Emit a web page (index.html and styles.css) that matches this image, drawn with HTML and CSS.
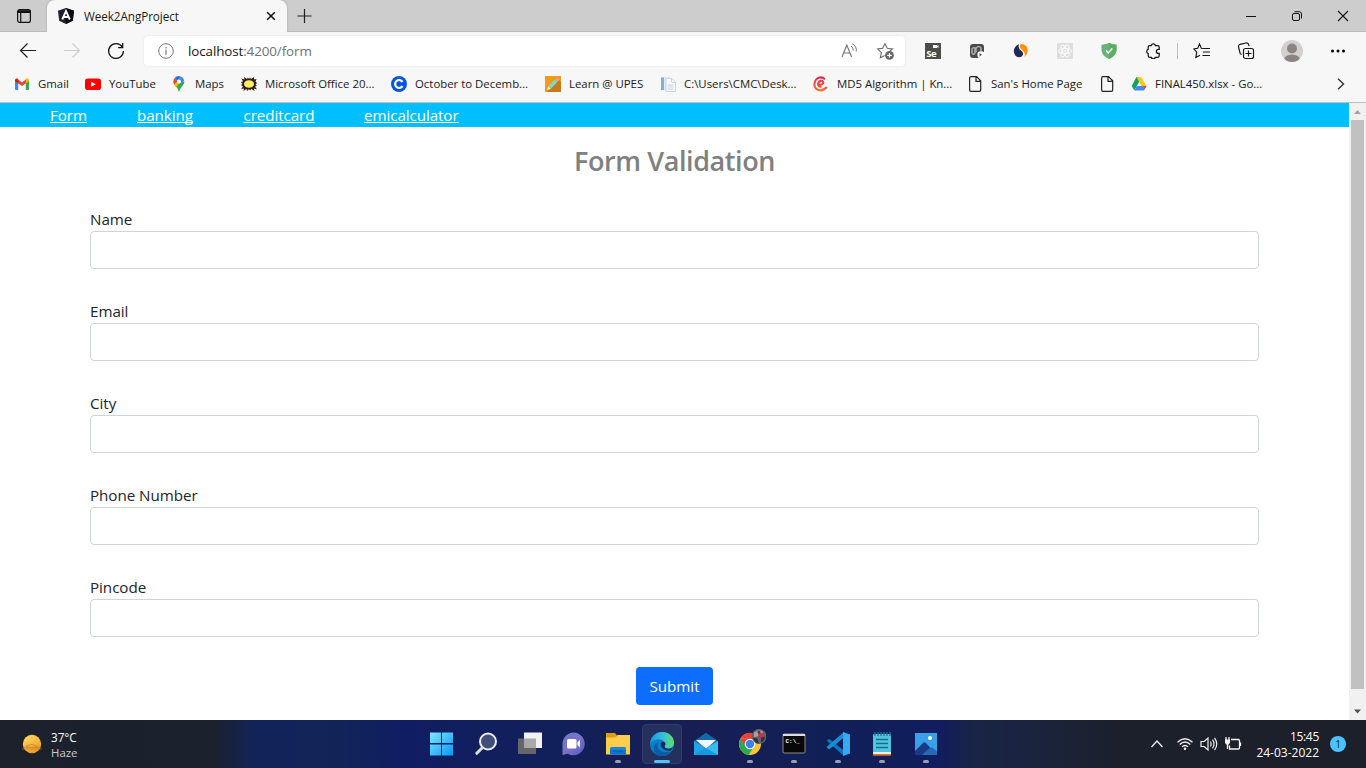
FILE: index.html
```html
<!DOCTYPE html>
<html lang="en">
<head>
<meta charset="utf-8">
<title>Week2AngProject</title>
<link rel="stylesheet" href="styles.css">
</head>
<body>
<div class="screen">
  <header class="tabstrip">
    <div class="tab-actions"><svg width="16" height="16" viewBox="0 0 16 16" fill="none" stroke="#111" stroke-width="1.2"><rect x="1.6" y="1.6" width="12.8" height="12.8" rx="2.2"/><path d="M1.6 4.2h12.8M2 3h12" stroke-width="1.6"/><path d="M4.7 4.5v9.7"/></svg></div>
    <div class="tab">
      <svg width="16" height="16" viewBox="0 0 16 16"><path d="M8 0l8 2.8-1.2 10L8 16l-6.8-3.200L0 2.800z" fill="#1d222b"/><path d="M8 0l8 2.800-1.200 10L8 16z" fill="#0b0f15"/><path d="M4.200 11.500L8 3l3.800 8.500M5.800 9h4.400" fill="none" stroke="#fff" stroke-width="1.900"/></svg>
      <span class="tab-title">Week2AngProject</span>
      <svg class="tab-close" width="10" height="10" viewBox="0 0 10 10"><path d="M1.200 1.200l7.600 7.600M8.800 1.200L1.200 8.800" stroke="#111" stroke-width="1.500"/></svg>
    </div>
    <svg class="new-tab" width="16" height="16" viewBox="0 0 16 16"><path d="M8.500 1v14M1.500 8h14" stroke="#222" stroke-width="1.200"/></svg>
    <div class="window-controls">
      <span><svg width="12" height="12" viewBox="0 0 12 12"><path d="M1 6.500h10" stroke="#111"/></svg></span>
      <span><svg width="12" height="12" viewBox="0 0 12 12" fill="none" stroke="#111"><rect x="1.500" y="3.500" width="7" height="7" rx="1.500"/><path d="M3.500 1.700h4.800q2.200 0 2.200 2.200v4.600"/></svg></span>
      <span><svg width="12" height="12" viewBox="0 0 12 12"><path d="M1 1l10 10M11 1L1 11" stroke="#111" stroke-width="1.100"/></svg></span>
    </div>
  </header>

  <div class="toolbar">
    <span class="tool"><svg width="18" height="16" viewBox="0 0 18 16" fill="none" stroke="#222" stroke-width="1.200"><path d="M17 7.500H1.500M8.500.5L1.500 7.500l7 7"/></svg></span>
    <span class="tool"><svg width="18" height="16" viewBox="0 0 18 16" fill="none" stroke="#cdcdcd" stroke-width="1.200"><path d="M1 7.500h15.500M9.500.5l7 7-7 7"/></svg></span>
    <span class="tool"><svg width="18" height="18" viewBox="0 0 18 18" fill="none" stroke="#111" stroke-width="1.250"><path d="M15.200 5A7.400 7.400 0 1 0 16.400 9"/><path d="M15.700 1v4.500h-4.500"/></svg></span>
    <div class="address">
      <svg width="16" height="16" viewBox="0 0 16 16" fill="none" stroke="#777"><circle cx="8" cy="8" r="7.300"/><path d="M8 6.800v5M8 4v1.500" stroke-width="1.200"/></svg>
      <span class="url"><b>localhost</b>:4200/form</span>
      <svg class="read" width="16" height="16" viewBox="0 0 16 16" fill="none" stroke="#747474"><path d="M1 14L5.800 2l4.800 12M2.700 10h6.200" stroke-width="1.100"/><path d="M10 3q2.500 1.500 2.300 4.500M11.300.7q4.500 2.500 4 7.800"/></svg>
      <svg width="18" height="18" viewBox="0 0 18 18"><path d="M9 1.500l2.200 4.700 5.200.7-3.300 3.100M9 1.500L6.700 6.200l-5 .7 3.700 3.700-1 5.100 4.300-2.300" fill="none" stroke="#6b6b6b" stroke-width="1.100"/><circle cx="13.500" cy="13.300" r="4.400" fill="#666"/><path d="M13.500 11v4.600M11.200 13.300h4.600" stroke="#fff" stroke-width="1.200"/></svg>
    </div>
    <span class="tool first"><svg width="16" height="16" viewBox="0 0 16 16"><path fill="#4a4d4a" d="M0 0h16v16H0z"/><path fill="#fff" d="M8 2h4v1l1.500-1v3L12 4v1H8z"/><text x="1.200" y="14" class="se">Se</text></svg></span>
    <span class="tool"><svg width="16" height="16" viewBox="0 0 16 16"><rect x="1" y="1" width="14" height="14" rx="3" fill="#4b4b4b"/><path d="M3 10V6q2.500-3 3 0v4q-2 2.500-3 0M7 9V5q3-3 5 0v4" fill="none" stroke="#aaa" stroke-width="1.600"/><rect x="8.500" y="8.500" width="7" height="6.500" rx="2" fill="#fff"/><path d="M10.500 10v3.500l2.500-1.700z" fill="#555"/></svg></span>
    <span class="tool"><svg width="16" height="16" viewBox="0 0 16 16"><path d="M6 1.200A7.200 7.200 0 0 0 3 13.200q3.500 2.300 6 0 2.500-3.200-.8-5.400Q4.500 5 6 1.200z" fill="#1f2a5a"/><path d="M7.200 1.200q4-1 6.600 2.500 2.800 6-2.600 10.300 2-4-1.700-6.500Q5.600 4.700 7.200 1.200z" fill="#fb9208"/></svg></span>
    <span class="tool"><svg width="16" height="16" viewBox="0 0 16 16" fill="none" stroke="#fafafa"><path d="M0 0h16v16H0z" fill="#dedede" stroke="none"/><ellipse cx="8" cy="8" rx="6.500" ry="2.600"/><ellipse cx="8" cy="8" rx="6.500" ry="2.600" transform="rotate(60 8 8)"/><ellipse cx="8" cy="8" rx="6.500" ry="2.600" transform="rotate(120 8 8)"/><circle cx="8" cy="8" r="1"/></svg></span>
    <span class="tool"><svg width="16" height="16" viewBox="0 0 16 16"><path d="M8 0q4 1.500 7.500 1.700v5.500Q15 13 8 16 1 13 .5 7.200V1.700Q4 1.500 8 0z" fill="#67b279"/><path d="M8 0q4 1.500 7.500 1.700v5.500Q15 13 8 16z" fill="#5cae63"/><path d="M5 7.500L7.300 10l4-4.500" fill="none" stroke="#fff" stroke-width="1.500"/></svg></span>
    <span class="tool"><svg width="16" height="16" viewBox="0 0 16 16" fill="none" stroke="#161616" stroke-width="1.250"><path d="M4.500 2.500H6.200a2.200 2.200 0 0 1 4.200 0h2.100q1.700 0 1.700 1.600v2.300h-.8a2 2 0 0 0 0 4h.8v2.300q0 1.600-1.700 1.600h-2.100a2.200 2.200 0 0 1-4.200 0H4.900q-1.700 0-1.700-1.600v-2.200a2.200 2.200 0 0 1 0-4.200V4.100q0-1.600 1.300-1.600z"/></svg></span>
    <i class="divider"></i>
    <span class="tool"><svg width="18" height="16" viewBox="0 0 18 16" fill="none" stroke="#161616" stroke-width="1.150"><path d="M10.700 5.500L8.300 5.200 6.500 1 4.700 5.200.8 5.900l2.900 3.300-.8 5.200 4-2.200M10.500 5.500H17M10 9h7M9.500 12.500H17"/></svg></span>
    <span class="tool"><svg width="18" height="18" viewBox="0 0 18 18" fill="none" stroke="#161616" stroke-width="1.200"><rect x="6.500" y="6.500" width="10" height="10" rx="2"/><path d="M11.500 8.500v6M8.500 11.500h6M4.700 12.500l-1.500-.8L1.500 5q-.3-2 1.500-2.700L9 1q2-.3 2.700 1.700l.4 1.500"/></svg></span>
    <span class="tool profile"><svg width="22" height="22" viewBox="0 0 22 22"><defs><clipPath id="face"><circle cx="11" cy="11" r="11"/></clipPath></defs><g clip-path="url(#face)"><path fill="#d2d0ce" d="M0 0h22v22H0z"/><g fill="#8a8583"><circle cx="11" cy="8.500" r="5"/><ellipse cx="11" cy="20" rx="8" ry="5.500"/></g></g></svg></span>
    <span class="tool profile"><svg width="16" height="4" viewBox="0 0 16 4"><circle cx="2.500" cy="2" r="1.500"/><circle cx="8" cy="2" r="1.500"/><circle cx="13.500" cy="2" r="1.500"/></svg></span>
  </div>

  <nav class="bookmarks">
    <a class="bm w55"><svg width="16" height="16" viewBox="0 0 16 16"><path fill="#4285f4" d="M1 4l3.200 2v8H2q-1 0-1-1z"/><path fill="#34a853" d="M15 4l-3.200 2v8H14q1 0 1-1z"/><path fill="#ea4335" d="M3 2.500l5 4 5-4v4L8 10 3 6.500z"/><path fill="#c5221f" d="M1 4q.3-2 2-1.500L4.200 3.500v4L1 5z"/><path fill="#fbbc04" d="M15 4q-.3-2-2-1.500l-1.200 1v4L15 5z"/></svg><span>Gmail</span></a>
    <a class="bm w70"><svg width="16" height="16" viewBox="0 0 16 16"><rect y="2.500" width="16" height="11.500" rx="2.800" fill="#f00"/><path fill="#fff" d="M6.200 5.700v5l4.600-2.500z"/></svg><span>YouTube</span></a>
    <a class="bm w54"><svg width="16" height="16" viewBox="0 0 16 16"><path fill="#34a853" d="M8 16q-.5-3-3-5.500T2.500 5.500h11Q13.300 8 11 10.500T8 16z"/><path fill="#fbbc04" d="M3 8.500L9.700.5 12 3 5 11z"/><path fill="#ea4335" d="M3.700 2L6.500 5 3 8.500Q1.500 4.500 3.700 2z"/><path fill="#1a73e8" d="M3.700 2Q6-.7 9.700.4L6.500 5z"/><path fill="#4285f4" d="M9.700.4q3 1 3.500 4L10 7.500 7.500 4z"/><circle cx="8" cy="5.500" r="2" fill="#fff"/></svg><span>Maps</span></a>
    <a class="bm w134"><svg width="16" height="16" viewBox="0 0 16 16"><path fill="#352010" d="M8 3l1-1.500 1 1.500L13 1v2.500l2.500-.5-1 2.500L16 7l-1.500 1.500L16 10l-2 .5 2 3-3-1 .5 2.500-3-2-1.500 1.500L8 13l-1.500 2L5.500 13 2.500 15l.5-2.500-3 .5 2-2.500L0 9l1.500-1L0 6l2-.5L.5 2.500l3 1L3 1l3 2 1-1.500z"/><ellipse cx="8" cy="8" rx="5" ry="3.800" fill="#ffeb66"/></svg><span>Microsoft Office 20...</span></a>
    <a class="bm w138"><svg width="16" height="16" viewBox="0 0 16 16"><circle cx="8" cy="8" r="8" fill="#0b57d7"/><path d="M11.500 5.800a4 4 0 1 0 0 4.400" fill="none" stroke="#fff" stroke-width="2.200"/></svg><span>October to Decemb...</span></a>
    <a class="bm w99"><svg width="16" height="16" viewBox="0 0 16 16"><path fill="#f49a1a" d="M0 0h16v16H0z"/><path fill="#c77818" d="M3 14L14 4l2 2v10H2z"/><path d="M4.500 11.500l7-7" stroke="#74dbc4" stroke-width="3.500"/><path d="M11 3l2-1 1.500 1.500-1 2z" fill="#ef96ae"/><path fill="#fff0cc" d="M2 14l1-3.800L6 13z"/></svg><span>Learn @ UPES</span></a>
    <a class="bm w137"><svg width="16" height="16" viewBox="0 0 16 16"><path fill="#e4e9ef" d="M1 1h9v13H1z"/><path fill="#79b4d6" d="M1 1.500h3V14H1z"/><path fill="#f8f9fb" stroke="#bdc7d3" stroke-width=".7" d="M6 2.500h6l3.500 3.500v9.500H6z"/><path d="M7.500 9h6M7.500 11h6M7.500 13h6M11.500 3v3.500H15" fill="none" stroke="#cbd3dc"/></svg><span>C:\Users\CMC\Desk...</span></a>
    <a class="bm w138"><svg width="16" height="16" viewBox="0 0 16 16" fill="none" stroke-width="2"><defs><linearGradient id="ember" y2="1" x2="0"><stop stop-color="#dc2854"/><stop offset="1" stop-color="#ff6a2f"/></linearGradient></defs><path d="M5 8.600Q9 9.300 10.300 7 10.300 4.600 8 4.800 5.200 5.500 5 8.600q.4 2.700 3.500 1.900M12 3.200Q8-.3 3.500 3-.5 8 3 12.600q5.500 4.200 10.800-1.600" stroke="url(#ember)"/></svg><span>MD5 Algorithm | Kn...</span></a>
    <a class="bm w116"><svg width="16" height="16" viewBox="0 0 16 16" fill="none" stroke="#222" stroke-width="1.200"><path d="M4 .6h5.500l4.200 4.200V14q0 1.400-1.500 1.400H4q-1.400 0-1.400-1.400V2Q2.600.6 4 .6zM9 .6V5.300h4.700"/></svg><span>San's Home Page</span></a>
    <a class="bm w16"><svg width="16" height="16" viewBox="0 0 16 16" fill="none" stroke="#222" stroke-width="1.200"><path d="M4 .6h5.500l4.200 4.200V14q0 1.400-1.500 1.400H4q-1.400 0-1.400-1.400V2Q2.600.6 4 .6zM9 .6V5.300h4.700"/></svg></a>
    <a class="bm w132"><svg width="16" height="16" viewBox="0 0 16 16"><path fill="#11a35c" d="M5.300 1.200H8l.8 3.500L3.300 14.300.7 10z"/><path fill="#fdc716" d="M6 1.200h4.300L15.400 10h-4.900L6 2z"/><path fill="#4688f4" d="M3.300 14.500L5.700 10h9.700l-2.300 4.500z"/><path fill="#ea4335" d="M12.200 10h3.200l-1.600 3z"/></svg><span>FINAL450.xlsx - Go...</span></a>
    <svg class="more" width="8" height="12" viewBox="0 0 8 12" fill="none" stroke="#333" stroke-width="1.400"><path d="M1 .7L6.500 6 1 11.300"/></svg>
  </nav>

  <div class="viewport">
    <main class="page">
      <nav class="site-nav"><a class="n1">Form</a><a class="n2">banking</a><a class="n3">creditcard</a><a class="n4">emicalculator</a></nav>
      <h3>Form Validation</h3>
      <form>
        <label>Name<input type="text"></label>
        <label>Email<input type="text"></label>
        <label>City<input type="text"></label>
        <label>Phone Number<input type="text"></label>
        <label>Pincode<input type="text"></label>
        <button type="button">Submit</button>
      </form>
    </main>
    <div class="scrollbar">
      <svg width="17" height="17" viewBox="0 0 17 17"><path d="M5 11h7L8.500 7z" fill="#a3a3a3"/></svg>
      <div class="thumb"></div>
      <svg width="17" height="17" viewBox="0 0 17 17"><path d="M5 6.500h7l-3.500 4z" fill="#505050"/></svg>
    </div>
  </div>

  <footer class="taskbar">
    <div class="weather">
      <svg width="22" height="20" viewBox="0 0 22 20"><defs><linearGradient id="sun" x2=".6" y2="1"><stop stop-color="#ffe071"/><stop offset="1" stop-color="#f39a16"/></linearGradient></defs><circle cx="11" cy="10" r="9.200" fill="url(#sun)"/><path d="M5 12.500q6-4 11 0M1 15h20M3 13.300h16" stroke="#a9803f" stroke-width="1.200" fill="none" opacity=".6"/></svg>
      <div class="reading"><p class="temp">37°C</p><p class="sky">Haze</p></div>
    </div>
    <div class="apps">
      <span class="app"><svg width="24" height="24" viewBox="0 0 24 24"><defs><linearGradient id="win" x2="1" y2="1"><stop stop-color="#7be8ff"/><stop offset="1" stop-color="#0b96f5"/></linearGradient></defs><path fill="url(#win)" d="M0 .500H11V11H0zM12 .500H23V11H12zM0 12.500H11v11H0zM12 12.500h11v11H12z"/></svg></span>
      <span class="app"><svg width="24" height="24" viewBox="0 0 24 24"><circle cx="14" cy="9.500" r="8" fill="#424d7c" stroke="#eee" stroke-width="2"/><path d="M8.300 15.700l-5.500 5.600" stroke="#ddd" stroke-width="3" stroke-linecap="round"/></svg></span>
      <span class="app"><svg width="24" height="24" viewBox="0 0 24 24"><path fill="#666" d="M0 6.500h18V22H0z"/><path fill="#f2f2f2" d="M6 .500h18v15.500H6z"/><path fill="#a9a9a9" d="M6 6.500h12V16H6z"/></svg></span>
      <span class="app"><svg width="24" height="24" viewBox="0 0 24 24"><defs><linearGradient id="chat" y2="1"><stop stop-color="#6679cf"/><stop offset=".5" stop-color="#7c72c8"/><stop offset="1" stop-color="#5059c9"/></linearGradient></defs><path d="M11.500.500a11.400 11.400 0 1 1-6 21.200L.5 23V12A11.300 11.300 0 0 1 11.500.500z" fill="url(#chat)"/><rect x="5" y="7" width="9.500" height="9.500" rx="1.500" fill="#fff"/><path d="M15.500 10.500l2.500-2.800v8l-2.500-2.800z" fill="#fff"/></svg></span>
      <span class="app open"><svg width="24" height="24" viewBox="0 0 24 24"><path fill="#e29c12" d="M0 1h9l2 2.500-2 3H0z"/><path fill="#fdcc4a" d="M0 5.500h9L11.500 3H24v19.500H0z"/><path fill="#0874cc" d="M4 22.500V17q0-2 2-2h12q2 0 2 2v5.500z"/><path fill="#1688dc" d="M4 16.500q1-1.500 3-1.500h11q2 0 2 2v1H4z"/><path stroke="#0456a3" d="M7 19h10"/></svg></span>
      <span class="app active"><svg width="24" height="24" viewBox="0 0 24 24"><defs><linearGradient id="sea"><stop stop-color="#1596df"/><stop offset=".55" stop-color="#35c1da"/><stop offset="1" stop-color="#65dc60"/></linearGradient></defs><circle cx="12" cy="12" r="12" fill="#0b7fc9"/><path d="M0 11.500C1 4.500 6 0 12 0c7 0 12 5 12 10.500 0 4-3 6-6.500 6s-4-1.800-3-3C17 8 7 3.500 0 11.500z" fill="url(#sea)"/><path d="M8 10.500C5 17 12 22 20.500 19.500 17 24 11 25.500 6 22 2 18.500 3.500 12 8 10.500z" fill="#0a5ca6"/><path d="M10.500 12q.8-2.700 3.500-2.200 2.500 1.500.8 4-1 2 2.700 3 3 0 5.300-1.300-.5 2-2.300 3.200Q12 19.500 10.500 12z" fill="#1b2757"/></svg></span>
      <span class="app"><svg width="24" height="24" viewBox="0 0 24 24"><path fill="#1268ac" d="M0 9L12 .7 24 9v5H0z"/><path fill="#f2f7fb" d="M2 8h20l-10 9z"/><path fill="#21a5e8" d="M0 9l12 7-12 7z"/><path fill="#38bbf2" d="M24 9L0 23h24z"/><path fill="#159ae1" d="M0 23l12-7 12 7z"/></svg></span>
      <span class="app open"><svg width="32" height="30" viewBox="0 0 32 30"><g transform="translate(2 -3)"><circle cx="14" cy="18" r="11" fill="#fbc633"/><path d="M4.500 12.500A11 11 0 0 1 24 13H14z" fill="#e84335"/><path d="M4.500 12.500a11 11 0 0 0 8.300 16.400l5.200-8.900-4 1.500-4-1.500z" fill="#2da951"/><path d="M4.500 12.500L9.800 21l2-8z" fill="#e84335"/><circle cx="14" cy="18" r="5.300" fill="#fff"/><circle cx="14" cy="18" r="4.200" fill="#3b80ed"/><circle cx="23" cy="10.500" r="7.400" fill="#6b6263"/><path d="M18 6.500l5-2.500 4 1.500-1 3-8 3z" fill="#a8a09e"/><path d="M22 7h5v5l-4 1z" fill="#bd3458"/><path d="M17 11.500l4 1 2 5q-4 0-6-6zM25 11.500l4-1q0 4-4 6z" fill="#273044"/><circle cx="23" cy="6" r="1.500" fill="#50372f"/></g></svg></span>
      <span class="app open"><svg width="24" height="24" viewBox="0 0 24 24"><rect x="1" y="2" width="22" height="19" rx="1" fill="#080808" stroke="#8c8c8c"/><path fill="#ddd" d="M1 2h22v2H1z"/><text x="3.500" y="10.500" class="prompt">C:\_</text></svg></span>
      <span class="app open"><svg width="24" height="24" viewBox="0 0 24 24"><path d="M1 8.500l2-1.700L18 18.500V24L1.500 9.500z" fill="#0877bd"/><path d="M1 15.800l2 1.600L18 5.500V0L1 14.500z" fill="#168fd3"/><path d="M17 0l7 2.500v19L17 24z" fill="#36a9f0"/></svg></span>
      <span class="app open"><svg width="24" height="24" viewBox="0 0 24 24"><rect x="3" y="2" width="18" height="20" rx="1" fill="#58c2dd"/><path d="M5 0v4M8 0v4M11 0v4M14 0v4M17 0v4M20 0v4" stroke="#167997" stroke-width="1.300"/><path d="M6 7.500h12M6 11.500h12M6 15.500h12" stroke="#087590" stroke-width="1.500"/><path d="M3 20h18v3H3z" fill="#eee"/><path d="M3 22.200h18v1.800H3z" fill="#b85b12"/></svg></span>
      <span class="app open"><svg width="24" height="24" viewBox="0 0 24 24"><path fill="#38a1e8" d="M1 1h22v22H1z"/><path fill="#183b83" d="M1 19l8-8q1.500-1.300 3 0L23 23H1z"/><path fill="#2869b7" d="M11 20l5-4q1.500-1 3 0l4 3.500V23H8z"/><circle cx="16" cy="6" r="2" fill="#fff"/></svg></span>
    </div>
    <div class="tray">
      <svg class="chev" width="14" height="10" viewBox="0 0 14 10"><path d="M1.500 8L7 2l5.500 6" fill="none" stroke="#eee" stroke-width="1.300"/></svg>
      <svg class="wifi" width="18" height="16" viewBox="0 0 18 16" fill="none" stroke="#f2f2f2" stroke-width="1.400"><path d="M1.500 6.200q7.500-7 15 0M3.700 8.500q5.300-5 10.600 0M6 10.800q3-2.800 6 0"/><circle cx="9" cy="12.800" r="1.300" fill="#fff" stroke="none"/></svg>
      <svg class="sound" width="18" height="16" viewBox="0 0 18 16" fill="none" stroke="#eee" stroke-width="1.200"><path d="M1 5.500h3.200L8 2v12l-3.800-3.500H1zM10.300 5.500q1.700 2.500 0 5M12.500 3.700q3 4.300 0 8.600M14.500 1.800q4.500 6.200 0 12.400"/></svg>
      <svg class="battery" width="18" height="16" viewBox="0 0 18 16" fill="none" stroke="#f4f4f4" stroke-width="1.300"><path d="M7 3.500h7.300q1.200 0 1.200 1.200v7q0 1.300-1.200 1.300H5.500V9.500M16.500 6.500v3.500"/><path d="M2 1v3M5 1v3M3.500 8v5" /><path d="M1 3.500h5v3L4.800 8.500H2.200L1 6.500z" fill="#f4f4f4" stroke="none"/></svg>
      <div class="clock"><p class="time">15:45</p><p class="date">24-03-2022</p></div>
      <span class="badge">1</span>
    </div>
  </footer>
</div>
</body>
</html>
```
FILE: styles.css
```css
* { box-sizing: border-box; }
body { margin: 0; font-family: "Open Sans", "Noto Sans", sans-serif; overflow: hidden; }
p { margin: 0; }
svg { display: block; flex: none; }
.screen { width: 1366px; height: 768px; display: flex; flex-direction: column; background: #fff; }

/* Browser chrome */
.tabstrip { height: 32px; display: flex; background: #cdcdcd; box-shadow: inset 0 -1px #bdbdbd; flex: none; }
.tab-actions { width: 47px; display: flex; align-items: center; padding-left: 16px; border-radius: 0 0 6px 0; }
.tab { width: 240px; height: 32px; background: #f7f7f7; border-radius: 8px 8px 0 0; display: flex; align-items: center; padding: 0 11px 0 11px; box-shadow: 0 0 2px #999; clip-path: inset(-2px -3px 0 -3px); }
.tab-title { margin: -1px 0 0 10px; font-size: 11.7px; color: #191919; letter-spacing: -.06px; flex: 1; white-space: nowrap; }
.new-tab { margin: 8px 0 0 9px; }
.window-controls { margin-left: auto; display: flex; }
.window-controls span { width: 46px; display: flex; align-items: center; justify-content: center; }
.toolbar { height: 38px; padding-left: 6px; background: #f7f7f7; display: flex; align-items: center; flex: none; }
.tool { width: 44px; height: 30px; display: flex; align-items: center; justify-content: center; flex: none; }
.tool.first { margin-left: 6px; }
.tool.profile { margin-left: 2px; }
.tool.profile + .profile { margin-left: 2px; }
.address { margin-left: 6px; width: 761px; height: 30px; border-radius: 4px; background: #fff; box-shadow: 0 0 2px #ddd; display: flex; align-items: center; padding: 0 11px 0 14px; }
.url { margin-left: 14px; font-size: 13.4px; letter-spacing: -.1px; line-height: 20px; color: #717171; flex: 1; }
.url b { font-weight: 400; color: #161616; }
.read { margin-right: 19px; }
.divider { width: 1px; height: 16px; background: #bcbcbc; margin: 0 2px; }
.se { font: bold 9.5px "Open Sans", sans-serif; fill: #fff; letter-spacing: -.3px; }
.bookmarks { height: 33px; padding: 0 0 5px 14px; background: #f7f7f7; border-bottom: 1px solid #bebebe; display: flex; align-items: center; gap: 16px; flex: none; }
.bm { display: flex; align-items: center; gap: 8px; font-size: 11.4px; color: #191919; white-space: nowrap; flex: none; }
.w55 { width: 55px; } .w70 { width: 70px; } .w54 { width: 54px; } .w134 { width: 134px; }
.w138 { width: 138px; } .w99 { width: 99px; } .w137 { width: 137px; } .w116 { width: 116px; }
.w16 { width: 16px; } .w132 { width: 132px; }
.more { margin-left: 58px; }

/* Web page */
.viewport { height: 617px; display: flex; flex: none; }
.page { width: 1349px; color: #212529; }
.site-nav { height: 24px; padding-left: 50px; background: #00bfff; color: #fff; display: flex; font-size: 15.2px; letter-spacing: -.08px; line-height: 24px; }
.site-nav a { text-decoration: underline; text-decoration-thickness: 1px; text-underline-offset: 1px; text-decoration-skip-ink: none; white-space: nowrap; }
.n1 { width: 87px; } .n2 { width: 106.500px; } .n3 { width: 120.500px; }
h3 { margin: 17px 0 29px; font-size: 27px; line-height: 34px; font-weight: 600; color: #808080; text-align: center; letter-spacing: -.42px; }
form { padding: 0 90px; display: flex; flex-direction: column; gap: 30px; }
label { display: block; height: 62px; font-size: 15.2px; line-height: 24px; letter-spacing: -.05px; }
input { display: block; width: 100%; height: 38px; border: 1px solid #ced4da; border-radius: 4px; background: #fff; padding: 6px 12px; }
button { align-self: center; width: 77px; height: 38px; border: 0; border-radius: 4px; background: #0d6efd; color: #fff; font: 15.2px/24px "Open Sans", sans-serif; padding: 0; }
.scrollbar { width: 17px; background: #f1f1f1; display: flex; flex-direction: column; }
.thumb { width: 13px; height: 569px; margin: 0 2px auto; background: #c1c1c1; }

/* Taskbar */
.taskbar { height: 48px; display: flex; background: linear-gradient(90deg, #1c212c 0, #1b212d 215px, #12235a 255px, #122457 340px, #101d63 400px, #11205a 550px, #181e53 690px, #102056 820px, #111d5e 940px, #192447 975px, #1a233a 1050px, #1b202b 1120px, #1c202b 100%); color: #fff; flex: none; }
.weather { width: 420px; flex: none; display: flex; align-items: center; padding-left: 21px; gap: 8px; font-size: 11.4px; line-height: 16px; }
.reading { padding-top: 2px; }
.temp { font-size: 11.7px; }
.sky { color: #c9ccd1; }
.apps { display: flex; padding-top: 4px; flex: none; }
.app { width: 44px; height: 40px; display: flex; align-items: center; justify-content: center; position: relative; }
.app.active { width: 40px; margin: 0 2px; background: #25305f; border: 1px solid #303b67; border-radius: 4px; }
.app.open::after, .app.active::after { content: ""; position: absolute; bottom: 1px; width: 6px; height: 3px; border-radius: 2px; background: #999eb0; }
.app.active::after { width: 16px; bottom: 0; background: #4cc2ff; }
.prompt { font: bold 6px "Liberation Mono", monospace; fill: #fff; }
.tray { flex: 1; display: flex; align-items: center; padding-left: 202px; }
.wifi { margin-left: 12px; }
.sound { margin-left: 6px; }
.battery { margin-left: 6px; }
.clock { width: 74px; margin-left: auto; padding-top: 1px; text-align: right; font-size: 12px; line-height: 16px; white-space: nowrap; }
.time { letter-spacing: -.3px; }
.badge { width: 16px; height: 16px; margin: 0 20px 0 11px; border-radius: 50%; background: #4cc2ff; color: #111c30; text-align: center; font-size: 10px; line-height: 16px; }
```
